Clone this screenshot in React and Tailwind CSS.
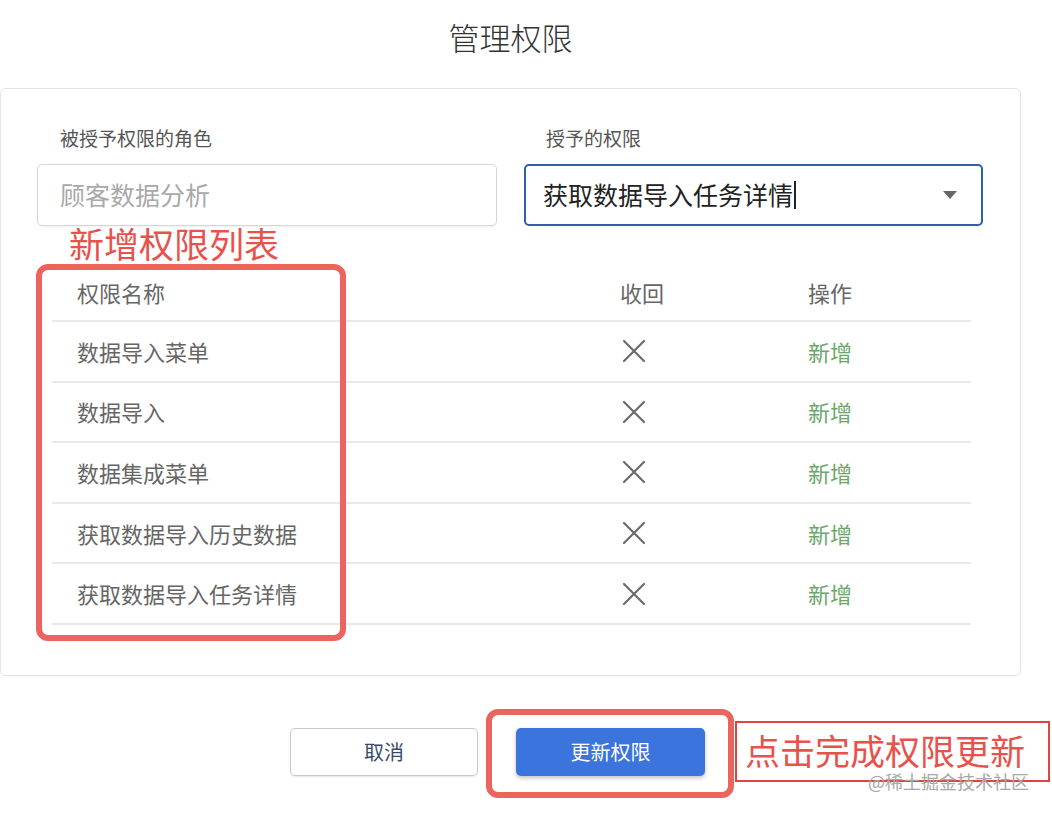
import React from "react"

const FONT = { fontFamily: '"Noto Sans CJK SC", "Noto Sans", sans-serif' }

const rows = ["数据导入菜单", "数据导入", "数据集成菜单", "获取数据导入历史数据", "获取数据导入任务详情"]

function CrossIcon() {
    return (
        <svg width="24" height="24" viewBox="0 0 24 24" className="text-[#6b6b6b]">
            <path d="M2 2 L22 22 M22 2 L2 22" stroke="currentColor" strokeWidth="2.2" strokeLinecap="round" />
        </svg>
    )
}

export default function App() {
    return (
        <div className="relative w-[1052px] h-[813px] bg-white overflow-hidden" style={FONT}>

            {/* Title */}
            <div className="w-[1021px] h-[88px] flex justify-center pt-[14px]">
                <h1 className="text-[31px] leading-[46px] text-[#333] font-light">管理权限</h1>
            </div>

            {/* Card */}
            <div className="w-[1021px] h-[588px] border border-[#e4e4e4] rounded-md shadow-[0_1px_3px_rgba(0,0,0,0.04)] pt-[37px] pl-[36px]">

                {/* Form fields */}
                <div className="flex gap-[27px]">
                    <div className="w-[460px]">
                        <p className="text-[19px] leading-[24px] text-[#555] pl-[23px] mb-[14px]">被授予权限的角色</p>
                        <div className="h-[62px] border border-[#d6d6d6] rounded-[5px] flex items-center pl-[22px] shadow-[0_1px_2px_rgba(0,0,0,0.06)]">
                            <span className="text-[25px] text-[#a9a9a9]">顾客数据分析</span>
                        </div>
                    </div>
                    <div className="w-[459px]">
                        <p className="text-[19px] leading-[24px] text-[#555] pl-[22px] mb-[14px]">授予的权限</p>
                        <div className="h-[62px] border-2 border-[#2f5fa8] rounded-[5px] flex items-center pl-[17px] pr-[24px]">
                            <span className="text-[25px] text-[#222]">获取数据导入任务详情</span>
                            <span className="w-[2px] h-[28px] bg-[#222] ml-[1px]"></span>
                            <svg width="14" height="8" viewBox="0 0 14 8" className="ml-auto">
                                <path d="M0 0 L14 0 L7 8 Z" fill="#666" />
                            </svg>
                        </div>
                    </div>
                </div>

                {/* Table */}
                <div className="mt-[39px] ml-[15px] w-[919px]">
                    <div className="h-[57px] flex items-center border-b-2 border-[#e9e9e9] text-[22px] text-[#666]">
                        <div className="w-[568px] pl-[25px]">权限名称</div>
                        <div className="w-[188px]">收回</div>
                        <div>操作</div>
                    </div>
                    {rows.map((name) => (
                        <div key={name} className="h-[60.6px] flex items-center border-b-2 border-[#e9e9e9] text-[22px]">
                            <div className="w-[568px] pl-[25px] text-[#666]">{name}</div>
                            <div className="w-[188px] pl-[2px] flex items-center"><CrossIcon /></div>
                            <div className="text-[#6aa86a]">新增</div>
                        </div>
                    ))}
                </div>
            </div>

            {/* Buttons */}
            <div className="flex gap-[38px] pl-[290px] mt-[52px]">
                <button className="w-[188px] h-[48px] border-[1.5px] border-[#c9c9c9] rounded-[5px] text-[20px] text-[#3a4a6b] shadow-[0_1px_2px_rgba(0,0,0,0.1)]">取消</button>
                <button className="w-[189px] h-[48px] rounded-[5px] bg-[#3b74dd] text-[20px] text-white shadow-[0_2px_4px_rgba(0,0,0,0.25)]">更新权限</button>
            </div>

            {/* Annotations */}
            <div className="absolute left-[69px] top-[220px] text-[35px] leading-[46px] text-[#e8524c]">新增权限列表</div>
            <div className="absolute left-[36px] top-[264px] w-[310px] h-[377px] border-[6px] border-[#ec645e] rounded-[12px]"></div>
            <div className="absolute left-[486px] top-[709px] w-[248px] h-[89px] border-[6px] border-[#ec645e] rounded-[12px]"></div>
            <div className="absolute left-[735px] top-[721px] w-[315px] h-[61px] border-2 border-[#e2433c] pl-[8px] pt-[7px]">
                <span className="block text-[35px] leading-[40px] text-[#e8524c]">点击完成权限更新</span>
            </div>
            <div className="absolute left-[868px] top-[769px] text-[18px] leading-[24px] text-[#a8a8a8]">@稀土掘金技术社区</div>
        </div>
    )
}
